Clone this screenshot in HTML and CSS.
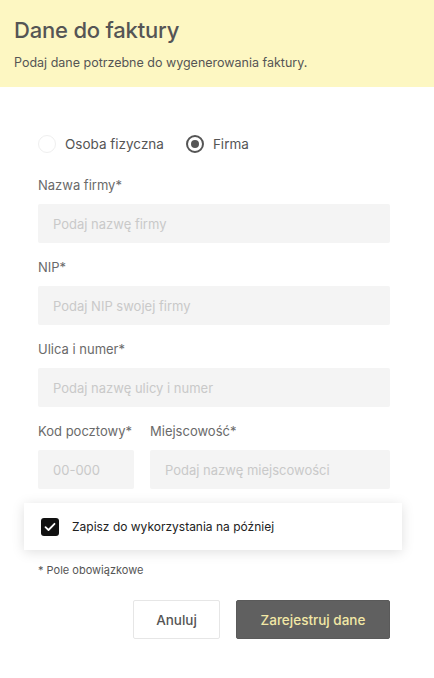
FILE: index.html
```html
<!DOCTYPE html>
<html lang="pl">
<head>
<meta charset="utf-8">
<link rel="stylesheet" href="styles.css">
</head>
<body>
<header class="header">
  <h1 class="title">Dane do faktury</h1>
  <p class="subtitle">Podaj dane potrzebne do wygenerowania faktury.</p>
</header>
<main class="form">
  <div class="radios">
    <label class="radio"><span class="circle"></span>Osoba fizyczna</label>
    <label class="radio"><span class="circle checked"></span>Firma</label>
  </div>
  <div class="field">
    <div class="label">Nazwa firmy*</div>
    <div class="input">Podaj nazwę firmy</div>
  </div>
  <div class="field">
    <div class="label">NIP*</div>
    <div class="input">Podaj NIP swojej firmy</div>
  </div>
  <div class="field">
    <div class="label">Ulica i numer*</div>
    <div class="input">Podaj nazwę ulicy i numer</div>
  </div>
  <div class="row">
    <div class="field zip">
      <div class="label">Kod pocztowy*</div>
      <div class="input">00-000</div>
    </div>
    <div class="field city">
      <div class="label">Miejscowość*</div>
      <div class="input">Podaj nazwę miejscowości</div>
    </div>
  </div>
  <div class="save">
    <span class="checkbox"><svg width="12" height="10" viewBox="0 0 12 10"><path d="M1.5 5.2 L4.5 8 L10.5 1.8" fill="none" stroke="#fff" stroke-width="1.8" stroke-linecap="round" stroke-linejoin="round"/></svg></span>
    <span class="save-text">Zapisz do wykorzystania na później</span>
  </div>
  <div class="note">* Pole obowiązkowe</div>
  <div class="actions">
    <button class="btn cancel">Anuluj</button>
    <button class="btn primary">Zarejestruj dane</button>
  </div>
</main>
</body>
</html>
```
FILE: styles.css
```css
* { box-sizing: border-box; }
body {
  margin: 0;
  font-family: Inter, "Liberation Sans", sans-serif;
  background: #fff;
  color: #555;
}
.header {
  background: #fdf7c2;
  padding: 16px 14px 0;
  height: 87px;
}
.title {
  margin: 0;
  font-size: 22px;
  font-weight: 500;
  color: #555;
  line-height: 28px;
  letter-spacing: -0.2px;
}
.subtitle {
  margin: 11px 0 0;
  font-size: 12.5px;
  color: #555;
  line-height: 16px;
}
.form {
  padding: 47px 44px 0 38px;
  display: flex;
  flex-direction: column;
}
.radios {
  display: flex;
  gap: 22px;
  height: 20px;
  align-items: center;
}
.radio {
  display: flex;
  align-items: center;
  gap: 9px;
  font-size: 13.5px;
  color: #555;
}
.circle {
  width: 18px;
  height: 18px;
  border-radius: 50%;
  border: 1px solid #efefef;
  display: inline-flex;
  align-items: center;
  justify-content: center;
}
.circle.checked {
  border: 2px solid #555;
}
.circle.checked::after {
  content: "";
  width: 8px;
  height: 8px;
  border-radius: 50%;
  background: #555;
}
.field {
  display: flex;
  flex-direction: column;
}
.radios + .field { margin-top: 23px; }
.field + .field, .field + .row { margin-top: 16px; }
.row .field { margin-top: 0; }
.label {
  font-size: 13px;
  color: #6a6a6a;
  line-height: 16px;
  height: 16px;
  white-space: nowrap;
}
.input {
  margin-top: 11px;
  height: 39px;
  background: #f4f4f4;
  border-radius: 2px;
  padding: 0 15px;
  display: flex;
  align-items: center;
  font-size: 13px;
  color: #c9c9c9;
  white-space: nowrap;
}
.row {
  display: flex;
  gap: 16px;
}
.zip { width: 96px; }
.city { flex: 1; }
.save {
  margin: 14px -12px 0 -14px;
  height: 47px;
  background: #fff;
  box-shadow: 0 2px 12px rgba(0,0,0,0.13);
  display: flex;
  align-items: center;
  padding-left: 17px;
  gap: 13px;
}
.checkbox {
  width: 18px;
  height: 18px;
  background: #111;
  border-radius: 3px;
  display: inline-flex;
  align-items: center;
  justify-content: center;
}
.save-text {
  font-size: 12px;
  color: #222;
}
.note {
  margin-top: 13px;
  font-size: 11px;
  color: #555;
  line-height: 14px;
}
.actions {
  margin-top: 23px;
  display: flex;
  justify-content: flex-end;
  gap: 16px;
}
.btn {
  height: 39px;
  font-family: inherit;
  font-size: 13.5px;
  font-weight: 500;
  border-radius: 2px;
  cursor: pointer;
}
.cancel {
  width: 87px;
  background: #fff;
  border: 1px solid #e6e6e6;
  color: #555;
}
.primary {
  width: 154px;
  background: #606060;
  border: 1px solid #5a5a5a;
  color: #f2e8a6;
}
```
